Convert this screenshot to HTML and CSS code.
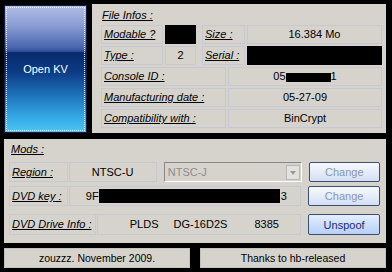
FILE: index.html
```html
<!DOCTYPE html>
<html lang="en">
<head>
    <meta charset="UTF-8">
    <title>KV Tool</title>
    <link rel="stylesheet" href="styles.css">
</head>
<body>
    <div class="app">
        <div class="top">
            <button class="kv">Open KV</button>
            <div class="panel info">
                <div class="title">File Infos :</div>
                <div class="row">
                    <div class="cell lbl mod">Modable ?</div>
                    <div class="cell redact small"></div>
                    <div class="cell lbl size">Size :</div>
                    <div class="cell val grow">16.384 Mo</div>
                </div>
                <div class="row">
                    <div class="cell lbl mod">Type :</div>
                    <div class="cell val small">2</div>
                    <div class="cell lbl size">Serial :</div>
                    <div class="cell redact grow"></div>
                </div>
                <div class="row">
                    <div class="cell lbl wide">Console ID :</div>
                    <div class="cell val grow">05<span class="bar id"></span>1</div>
                </div>
                <div class="row">
                    <div class="cell lbl wide">Manufacturing date :</div>
                    <div class="cell val grow">05-27-09</div>
                </div>
                <div class="row">
                    <div class="cell lbl wide">Compatibility with :</div>
                    <div class="cell val grow">BinCrypt</div>
                </div>
            </div>
        </div>

        <div class="panel mods">
            <div class="title">Mods :</div>
            <div class="row">
                <div class="cell lbl short">Region :</div>
                <div class="cell val region">NTSC-U</div>
                <div class="select">
                    <span>NTSC-J</span>
                    <span class="arrow"></span>
                </div>
                <button class="btn off">Change</button>
            </div>
            <div class="row">
                <div class="cell lbl short">DVD key :</div>
                <div class="cell val key">9F<span class="bar keybar"></span>3</div>
                <button class="btn off">Change</button>
            </div>
            <div class="row drive">
                <div class="cell lbl long">DVD Drive Info :</div>
                <div class="cell val driveval">
                    <span class="vendor">PLDS</span>
                    <span class="model">DG-16D2S</span>
                    <span>8385</span>
                </div>
                <button class="btn on">Unspoof</button>
            </div>
        </div>

        <div class="footer">
            <div class="note">zouzzz. November 2009.</div>
            <div class="note">Thanks to hb-released</div>
        </div>
    </div>
</body>
</html>
```

FILE: styles.css
```css
body {
    margin: 0;
    background: #000;
    font-family: "Liberation Sans", Arial, sans-serif;
    font-size: 11px;
    color: #000;
}
.app {
    padding: 4px 6px 0 4px;
    width: 382px;
}
.top {
    display: flex;
    gap: 5px;
    height: 129px;
}
.kv {
    width: 83px;
    margin-top: 1px;
    border: 1px solid #10204a;
    color: #fff;
    font-family: inherit;
    font-size: 11px;
    outline: 1px dotted #e8ecf4;
    outline-offset: -3px;
    background: linear-gradient(to bottom, #b2bde6 0%, #8c9ed4 15%, #4a66b0 33%, #2e4e9c 36%, #082a6c 37%, #0c3a84 52%, #1c70b8 70%, #34a8e4 88%, #4cc6f2 100%);
}
.panel {
    background: #d6d3cd;
}
.info {
    flex: 1;
    padding: 4px 4px 7px 9px;
}
.title {
    height: 15px;
    line-height: 14px;
    font-style: italic;
    text-decoration: underline;
    padding-left: 1px;
}
.row {
    display: flex;
    height: 19px;
    margin-top: 2px;
}
.cell {
    box-sizing: border-box;
    border: 1px solid #c6c9d2;
    line-height: 17px;
    white-space: nowrap;
}
.lbl {
    font-style: italic;
    text-decoration: underline;
    padding-left: 2px;
}
.val {
    text-align: center;
    margin-left: 2px;
}
.redact {
    background: #000;
    border-color: #000;
    margin-left: 2px;
}
.mod { width: 62px; }
.small { width: 31px; }
.size { width: 43px; margin-left: 6px; }
.wide { width: 125px; }
.grow { flex: 1; }
.bar {
    display: inline-block;
    background: #000;
    vertical-align: -2px;
}
.id { width: 45px; height: 9px; }

.mods {
    margin-top: 6px;
    height: 104px;
    box-sizing: border-box;
    padding: 3px 6px 8px 5px;
}
.mods .title {
    height: 16px;
    padding-left: 2px;
    margin-bottom: 2px;
}
.mods .row {
    height: 20px;
    margin-top: 4px;
}
.mods .row.drive {
    height: 21px;
    margin-top: 8px;
}
.mods .cell {
    line-height: 18px;
}
.short { width: 59px; }
.long { width: 87px; }
.mods .val { margin-left: 1px; }
.region { width: 89px; }
.key {
    width: 233px;
    text-align: left;
    padding-left: 16px;
}
.keybar { width: 181px; height: 14px; vertical-align: -3px; margin-right: 1px; }
.driveval {
    width: 205px;
    text-align: left;
    padding-left: 32px;
}
.vendor { margin-right: 12px; }
.model { margin-right: 24px; }
.select {
    box-sizing: border-box;
    width: 139px;
    margin-left: 7px;
    display: flex;
    align-items: center;
    justify-content: space-between;
    border: 1px solid;
    border-color: #888 #fff #fff #888;
    color: #8c8c8c;
    padding: 0 1px 0 3px;
}
.arrow {
    width: 14px;
    height: 15px;
    background: #e4e2de;
    border: 1px solid #b8b8b8;
    box-sizing: border-box;
    position: relative;
}
.arrow::after {
    content: "";
    position: absolute;
    left: 3px;
    top: 5px;
    border-left: 3px solid transparent;
    border-right: 3px solid transparent;
    border-top: 4px solid #9a9a9a;
}
.btn {
    width: 72px;
    margin-left: 7px;
    border: 1px solid #3c4e72;
    border-radius: 2px;
    font-family: inherit;
    font-size: 11px;
    padding: 0;
}
.btn.off {
    color: #8896ac;
    background: linear-gradient(to bottom, #f6f8fc, #e2eaf8 60%, #d2def4);
}
.btn.on {
    color: #1a2c6c;
    background: linear-gradient(to bottom, #e4eefe, #c8dcfa 60%, #b8d0f6);
}
.footer {
    display: flex;
    gap: 10px;
    margin-top: 5px;
    height: 20px;
}
.note {
    flex: 1;
    background: #d6d3cd;
    border: 1px solid #c4c2bc;
    text-align: center;
    line-height: 18px;
    font-size: 10.5px;
}
```
